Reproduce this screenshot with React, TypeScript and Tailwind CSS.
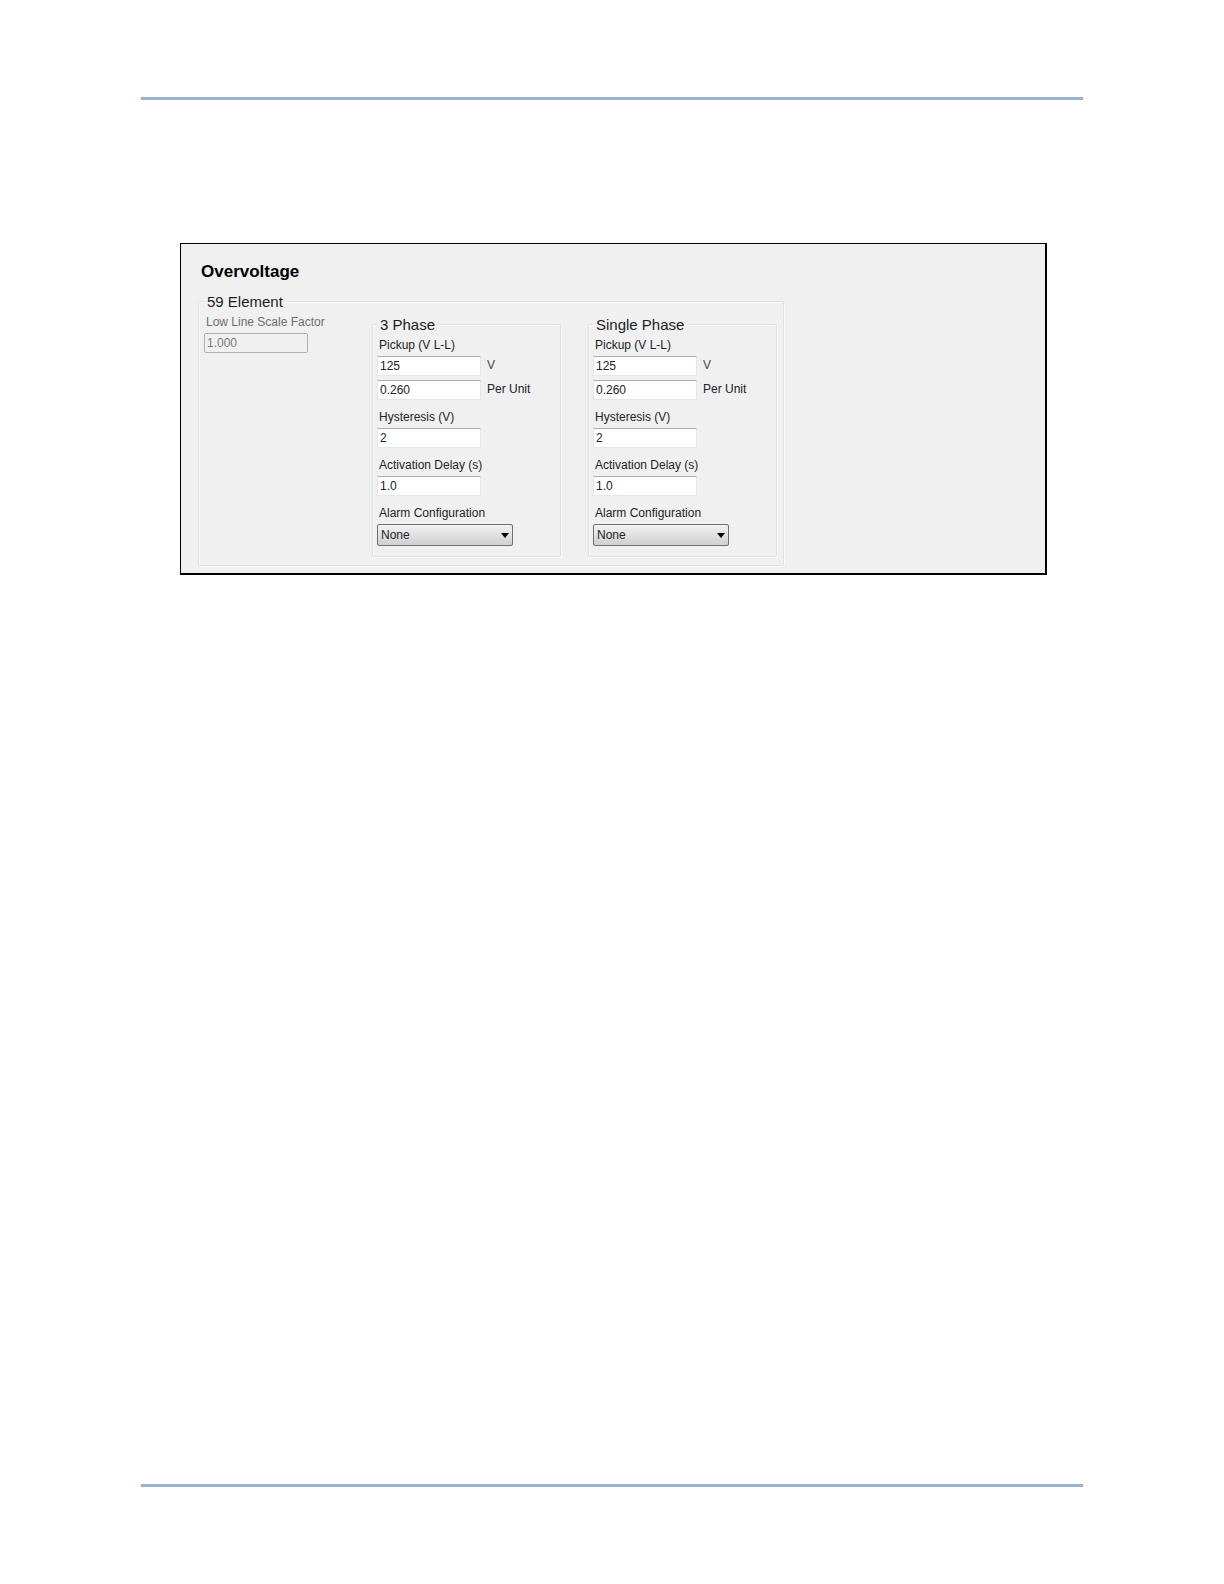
import { clsx } from 'clsx';
import { type ReactNode, useId } from 'react';

type FieldProps = {
  label: string;
  value: string;
  disabled?: boolean;
};

type GroupProps = {
  title: string;
  className?: string;
  children: ReactNode;
};

// etched group box

function Group({ title, className, children }: GroupProps) {
  return (
    <fieldset
      className={clsx(
        'rounded-xs border border-[#dfe2e3] shadow-[1px_1px_0_#fafafa,inset_1px_1px_0_#fafafa]',
        className
      )}
    >
      <legend className="bg-[#f0f0f0] px-[3px] pt-0.5 text-[15px] text-[#1c1c24] leading-4">
        {title}
      </legend>
      {children}
    </fieldset>
  );
}

function TextBox({
  id,
  value,
  label,
  disabled,
}: FieldProps & { id?: string }) {
  return (
    <input
      aria-label={id ? undefined : label}
      className="block h-5 w-[104px] border border-[#e3e7ec] border-t-[#abadb3] bg-white px-0.5 text-xs disabled:rounded-xs disabled:border-[#afafaf] disabled:bg-[#f0f0f0] disabled:text-[#7a7a7a]"
      defaultValue={value}
      disabled={disabled}
      id={id}
      type="text"
    />
  );
}

function Field({ label, value, disabled }: FieldProps) {
  const id = useId();

  return (
    <div className="flex flex-col gap-[3px]">
      <label
        className={clsx(
          'pl-0.5 text-xs leading-4',
          disabled && 'text-[#6e6e6e]'
        )}
        htmlFor={id}
      >
        {label}
      </label>
      <TextBox disabled={disabled} id={id} label={label} value={value} />
    </div>
  );
}

function Phase({ title }: { title: string }) {
  const pickupId = useId();
  const alarmId = useId();

  return (
    <Group className="w-[189px] px-1 pb-2.5" title={title}>
      <div className="flex flex-col gap-[9px] pt-1">
        <div className="flex flex-col gap-[3px]">
          <label className="pl-0.5 text-xs leading-4" htmlFor={pickupId}>
            Pickup (V L-L)
          </label>
          <div className="flex flex-col gap-1">
            <div className="flex gap-1.5">
              <TextBox id={pickupId} label="Pickup" value="125" />
              <span className="text-[#4a4a4a] text-xs leading-[18px]">V</span>
            </div>
            <div className="flex gap-1.5">
              <TextBox label="Pickup per unit" value="0.260" />
              <span className="text-xs leading-[18px]">Per Unit</span>
            </div>
          </div>
        </div>
        <Field label="Hysteresis (V)" value="2" />
        <Field label="Activation Delay (s)" value="1.0" />
        <div className="flex flex-col gap-[3px]">
          <label className="pl-0.5 text-xs leading-4" htmlFor={alarmId}>
            Alarm Configuration
          </label>
          <div className="relative w-[136px]">
            <select
              className="block h-[22px] w-full appearance-none rounded-xs border border-[#707070] bg-linear-to-b from-[#f2f2f2] to-[#d0d0d0] px-[3px] text-xs"
              defaultValue="None"
              id={alarmId}
            >
              <option>None</option>
            </select>
            <svg
              aria-hidden="true"
              className="pointer-events-none absolute top-[9px] right-1 h-[5px] w-2"
              viewBox="0 0 8 5"
            >
              <path d="M0 0h8L4 5z" fill="#000" />
            </svg>
          </div>
        </div>
      </div>
    </Group>
  );
}

export default function App() {
  return (
    <div className="flex min-h-screen flex-col justify-between bg-white px-[141px] py-[97px] font-['Liberation_Sans',Arial,sans-serif] text-[#222228]">
      <main className="border-[#9ab1d2] border-t-3 pt-[143px]">
        <section className="mr-9 ml-[39px] flex flex-col items-start border-black border-t border-r-2 border-b-2 border-l bg-[#f0f0f0] pt-4 pb-[7px] pl-[17px]">
          <h1 className="pl-[3px] font-bold text-[17px] text-black leading-6">
            Overvoltage
          </h1>
          <Group className="mt-2 pr-1.5 pb-2 pl-[5px]" title="59 Element">
            <div className="flex">
              <div className="w-[168px] pt-1">
                <Field disabled label="Low Line Scale Factor" value="1.000" />
              </div>
              <div className="flex gap-[27px] pt-[5px]">
                <Phase title="3 Phase" />
                <Phase title="Single Phase" />
              </div>
            </div>
          </Group>
        </section>
      </main>
      <footer className="border-[#9ab1d2] border-b-3" />
    </div>
  );
}
